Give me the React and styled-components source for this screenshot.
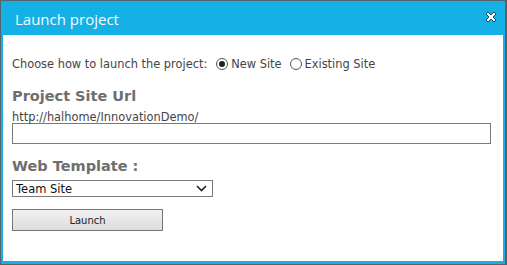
import React from "react";
import styled, { createGlobalStyle } from "styled-components";

const Global = createGlobalStyle`
  html, body { margin: 0; padding: 0; background: #56626c; }
  body { width: 507px; height: 265px; overflow: hidden; }
`;

const Frame = styled.div`
  padding: 1px 2px 1px 1px;
  width: 507px;
  height: 265px;
  box-sizing: border-box;
`;

const Dialog = styled.div`
  background: #15b0e6;
  height: 263px;
  display: flex;
  flex-direction: column;
  padding: 0 2px 3px 2px;
  box-sizing: border-box;
`;

const Header = styled.div`
  height: 34px;
  display: flex;
  align-items: center;
  justify-content: space-between;
  padding: 0 6px 0 12px;
  flex-shrink: 0;
`;

const Title = styled.div`
  font-family: "Open Sans", "DejaVu Sans", sans-serif;
  font-size: 15px;
  color: #f4fbff;
  margin-top: 1px;
`;

const Close = styled.button`
  border: 0;
  background: none;
  padding: 0;
  width: 12px;
  height: 12px;
  display: flex;
  margin-top: -3px;
`;

const Body = styled.div`
  flex: 1;
  background: #fff;
  padding: 17px 12px 0 9px;
  font-family: "DejaVu Sans", Verdana, sans-serif;
  font-size: 11.4px;
  color: #444;
`;

const ChoiceRow = styled.div`
  display: flex;
  align-items: center;
  height: 24px;
`;

const ChoiceLabel = styled.span`
  margin-right: 9px;
`;

const RadioOption = styled.label`
  display: flex;
  align-items: center;
  margin-right: 8px;
`;

const RadioCircle = styled.span`
  width: 12px;
  height: 12px;
  border: 1px solid #555;
  border-radius: 50%;
  box-sizing: border-box;
  display: flex;
  align-items: center;
  justify-content: center;
  margin-right: 3px;
  &::after {
    content: "";
    width: 6px;
    height: 6px;
    border-radius: 50%;
    background: ${(p) => (p.$checked ? "#222" : "transparent")};
  }
`;

const Heading = styled.div`
  font-family: "DejaVu Sans", Verdana, sans-serif;
  font-weight: bold;
  font-size: 14.5px;
  color: #6e6e6e;
  margin-top: ${(p) => p.$top || 0}px;
  line-height: 18px;
`;

const UrlText = styled.div`
  margin-top: 6px;
  line-height: 12px;
`;

const TextInput = styled.div`
  height: 21px;
  border: 1px solid #7a7a7a;
  box-sizing: border-box;
  width: 479px;
`;

const Select = styled.div`
  margin-top: 5px;
  width: 201px;
  height: 17px;
  border: 1px solid #7a7a7a;
  box-sizing: border-box;
  display: flex;
  align-items: center;
  justify-content: space-between;
  padding: 0 5px 0 3px;
  font-size: 11.5px;
  color: #111;
`;

const Button = styled.div`
  margin-top: 12px;
  width: 151px;
  height: 22px;
  border: 1px solid #777;
  box-sizing: border-box;
  background: linear-gradient(#f2f2f2, #dcdcdc);
  display: flex;
  align-items: center;
  justify-content: center;
  font-size: 10px;
  color: #222;
`;

export default function App() {
  return (
    <Frame>
      <Global />
      <Dialog>
        <Header>
          <Title>Launch project</Title>
          <Close aria-label="Close">
            <svg width="12" height="12" viewBox="0 0 12 12">
              <path
                d="M1 3 L3 1 L6 4 L9 1 L11 3 L8 6 L11 9 L9 11 L6 8 L3 11 L1 9 L4 6 Z"
                fill="#fff"
                stroke="#1d4a63"
                strokeWidth="1"
                strokeLinejoin="round"
              />
            </svg>
          </Close>
        </Header>
        <Body>
          <ChoiceRow>
            <ChoiceLabel>Choose how to launch the project:</ChoiceLabel>
            <RadioOption>
              <RadioCircle $checked />
              New Site
            </RadioOption>
            <RadioOption>
              <RadioCircle />
              Existing Site
            </RadioOption>
          </ChoiceRow>
          <Heading $top={11}>Project Site Url</Heading>
          <UrlText>http://halhome/InnovationDemo/</UrlText>
          <TextInput />
          <Heading $top={13}>Web Template :</Heading>
          <Select>
            <span>Team Site</span>
            <svg width="11" height="7" viewBox="0 0 11 7">
              <path d="M1 1 L5.5 5.5 L10 1" fill="none" stroke="#222" strokeWidth="1.6" />
            </svg>
          </Select>
          <Button>Launch</Button>
        </Body>
      </Dialog>
    </Frame>
  );
}
